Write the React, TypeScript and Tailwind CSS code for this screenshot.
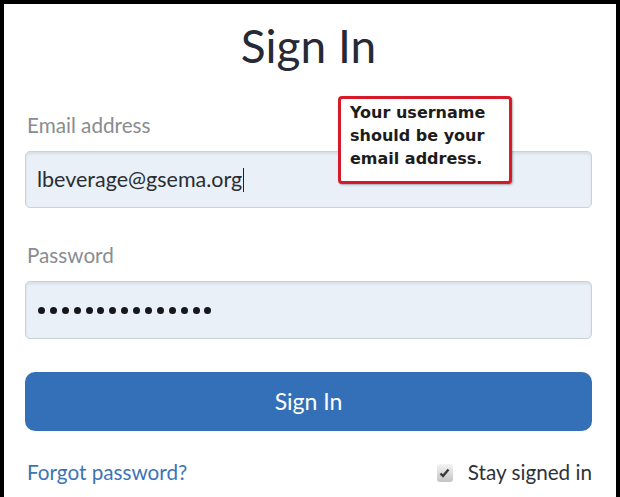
export default function App() {
  return (
    <div className="relative w-[620px] h-[497px] overflow-hidden bg-white border-t-4 border-l-4 border-r-4 border-black font-['Lato','Liberation_Sans',sans-serif]">
      <div className="flex flex-col pl-[21px] pr-[24px]">
        <h1 className="mt-[14px] h-[56px] text-center text-[46px] leading-[56px] text-[#262a36]">Sign In</h1>

        <label className="mt-[39px] h-[24px] pl-[2px] text-[20.7px] leading-[24px] text-[#8a8c90]">Email address</label>
        <div className="mt-[14px] h-[57px] flex items-center rounded-[5px] border border-[#c9d1da] bg-[#e9f0f8] pl-[11px] shadow-[inset_0_2px_3px_rgba(0,0,0,0.08)]">
          <span className="text-[21.5px] text-[#2a2d33]">lbeverage@gsema.org</span>
          <span className="ml-[1px] w-[1px] h-[24px] bg-[#222]" />
        </div>

        <label className="mt-[35px] h-[24px] pl-[2px] text-[20.7px] leading-[24px] text-[#8a8c90]">Password</label>
        <div className="mt-[14px] h-[58px] flex items-center rounded-[5px] border border-[#c9d1da] bg-[#e9f0f8] pl-[12px] shadow-[inset_0_2px_3px_rgba(0,0,0,0.08)]">
          <span className="flex gap-[4.9px]">
            {Array.from({ length: 15 }).map((_, i) => (
              <span key={i} className="w-[7px] h-[7px] rounded-full bg-[#15171c]" />
            ))}
          </span>
        </div>

        <button className="mt-[33px] h-[59px] rounded-[10px] bg-[#3370b8] text-[23px] text-white">Sign In</button>

        <div className="mt-[26px] flex items-center justify-between">
          <span className="pl-[2px] text-[20.7px] text-[#3b74b6]">Forgot password?</span>
          <span className="flex items-center gap-[15px]">
            <span className="w-[16px] h-[18px] rounded-[3px] bg-gradient-to-b from-[#f4f4f4] to-[#c4c4c4] flex items-center justify-center">
              <svg width="11" height="10" viewBox="0 0 11 10">
                <path d="M1.5 5.5 L4 8 L9.5 1.5" stroke="#3a3a3a" strokeWidth="2.4" fill="none" />
              </svg>
            </span>
            <span className="text-[20.7px] text-[#2f3238]">Stay signed in</span>
          </span>
        </div>
      </div>

      <div className="absolute left-[334px] top-[92px] w-[174px] h-[88px] rounded-[4px] border-[3px] border-[#d61a2a] bg-white pl-[9px] pt-[2px] shadow-[1px_1px_2px_rgba(0,0,0,0.3)] font-['DejaVu_Sans',sans-serif] text-[16px] font-bold leading-[23px] text-[#1c1c1c]">
        <div>Your username</div>
        <div>should be your</div>
        <div>email address.</div>
      </div>
    </div>
  );
}
